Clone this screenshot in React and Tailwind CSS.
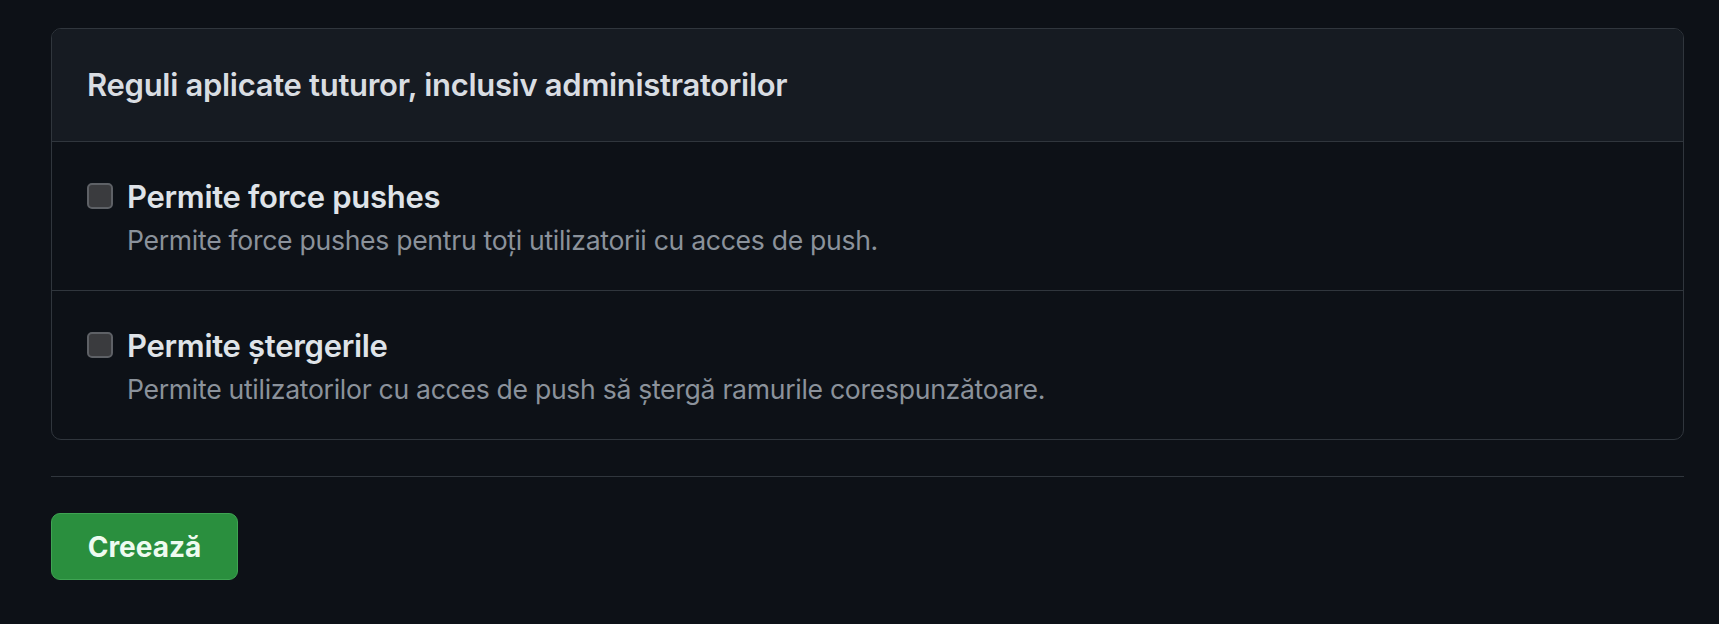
import React from 'react';

const rules = [
  {
    id: 'force',
    title: 'Permite force pushes',
    desc: 'Permite force pushes pentru toți utilizatorii cu acces de push.',
  },
  {
    id: 'delete',
    title: 'Permite ștergerile',
    desc: 'Permite utilizatorilor cu acces de push să ștergă ramurile corespunzătoare.',
  },
];

const RuleRow = ({ rule, last }) => (
  <div className={`flex items-start gap-[14px] px-[35px] pt-[38px] pb-[35px] ${last ? '' : 'border-b border-[#30363d]'}`}>
    <span className="mt-[3px] w-[26px] h-[26px] shrink-0 rounded-[5px] bg-[#3a3b3e] border-2 border-[#5e6166]" />
    <div className="flex flex-col">
      <span className="text-[31px] leading-[34px] font-semibold tracking-[-0.3px] text-[#dfe3e8]">{rule.title}</span>
      <span className="mt-[11px] text-[26.6px] leading-[30px] tracking-[-0.3px] text-[#8b929b]">{rule.desc}</span>
    </div>
  </div>
);

export default function App() {
  return (
    <div
      className="min-h-[624px] bg-[#0d1117] pl-[51px] pr-[35px] pt-[28px]"
      style={{ fontFamily: 'Inter, "Noto Sans", sans-serif' }}
    >
      <div className="rounded-[10px] border border-[#30363d] overflow-hidden">
        <div className="h-[113px] flex items-center px-[35px] bg-[#161b22] border-b border-[#30363d]">
          <h2 className="text-[31px] font-semibold tracking-[-0.3px] text-[#d9dde2]">
            Reguli aplicate tuturor, inclusiv administratorilor
          </h2>
        </div>
        {rules.map((r, i) => (
          <RuleRow key={r.id} rule={r} last={i === rules.length - 1} />
        ))}
      </div>

      <div className="mt-[36px] h-px bg-[#30363d]" />

      <button className="mt-[36px] w-[187px] h-[67px] rounded-[9px] bg-[#2a8f3e] border border-[#3fa453] text-[28px] font-bold text-[#eefbf0]">
        Creează
      </button>
    </div>
  );
}
